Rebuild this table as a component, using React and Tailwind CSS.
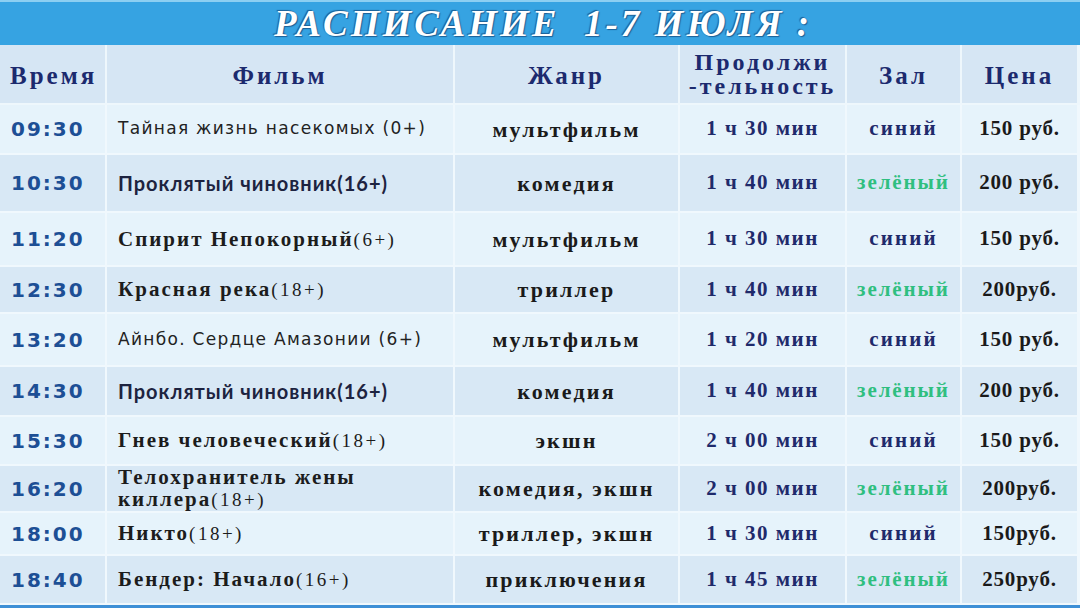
import React from "react";

const rows = [
  { t: "09:30", f: "Тайная жизнь насекомых (0+)", fs: "a", g: "мультфильм", d: "1 ч 30 мин", z: "синий", p: "150 руб." },
  { t: "10:30", f: "Проклятый чиновник(16+)", fs: "b", g: "комедия", d: "1 ч 40 мин", z: "зелёный", p: "200 руб." },
  { t: "11:20", f: "Спирит Непокорный", r: "(6+)", fs: "c", g: "мультфильм", d: "1 ч 30 мин", z: "синий", p: "150 руб." },
  { t: "12:30", f: "Красная река", r: "(18+)", fs: "c", g: "триллер", d: "1 ч 40 мин", z: "зелёный", p: "200руб." },
  { t: "13:20", f: "Айнбо. Сердце Амазонии (6+)", fs: "a", g: "мультфильм", d: "1 ч 20 мин", z: "синий", p: "150 руб." },
  { t: "14:30", f: "Проклятый чиновник(16+)", fs: "b", g: "комедия", d: "1 ч 40 мин", z: "зелёный", p: "200 руб." },
  { t: "15:30", f: "Гнев человеческий", r: "(18+)", fs: "c", g: "экшн", d: "2 ч 00 мин", z: "синий", p: "150 руб." },
  { t: "16:20", f: "Телохранитель жены", f2: "киллера", r: "(18+)", fs: "c", g: "комедия, экшн", d: "2 ч 00 мин", z: "зелёный", p: "200руб." },
  { t: "18:00", f: "Никто", r: "(18+)", fs: "c", g: "триллер, экшн", d: "1 ч 30 мин", z: "синий", p: "150руб." },
  { t: "18:40", f: "Бендер: Начало", r: "(16+)", fs: "c", g: "приключения", d: "1 ч 45 мин", z: "зелёный", p: "250руб." },
];

const heights = ["h-[50px]", "h-[58px]", "h-[54px]", "h-[47px]", "h-[53px]", "h-[50px]", "h-[49px]", "h-[47px]", "h-[43px]", "h-[49px]"];

const serif = "font-['Liberation_Serif','Times_New_Roman',serif] font-bold";

function Film({ r }) {
  if (r.fs === "a") {
    return (
      <span className="font-['DejaVu_Sans',Verdana,sans-serif] text-[17px] tracking-[1.3px] text-[#222]">{r.f}</span>
    );
  }
  if (r.fs === "b") {
    return (
      <span className="font-['Lato','Open_Sans',sans-serif] font-bold text-[20px] tracking-[1px] text-[#1d2340]">{r.f}</span>
    );
  }
  return (
    <span className={`${serif} text-[21px] tracking-[2px] text-[#1c1c1c] leading-[22px]`}>
      {r.f}
      {r.f2 ? <br /> : null}
      {r.f2}
      <span className="text-[19px] font-normal tracking-[2.5px]">{r.r}</span>
    </span>
  );
}

export default function App() {
  return (
    <div className="w-[1080px] h-[608px] overflow-hidden bg-[#e6f3fb] flex flex-col">
      <div className="h-[45px] bg-[#36a3e2] border-t-2 border-[#8ccff2] flex items-center justify-center pl-[6px]">
        <span className="font-['Liberation_Serif','Times_New_Roman',serif] font-bold italic text-[37px] tracking-[3px] text-white whitespace-pre leading-none [text-shadow:1px_1px_1px_#1b5f96,-1px_-1px_1px_#1b5f96]">
          РАСПИСАНИЕ  1-7 ИЮЛЯ :
        </span>
      </div>
      <div className="flex flex-col">
        <div className="flex h-[60px] border-b-2 border-[#eef7fc] text-[#1c2a6e]">
          <div className="w-[107px] border-r-2 border-[#eef7fc] bg-[#d6e6f4] flex items-center pl-[10px] pt-[3px]">
            <span className={`${serif} text-[25px] tracking-[3px]`}>Время</span>
          </div>
          <div className="w-[348px] border-r-2 border-[#eef7fc] bg-[#d6e6f4] flex items-center justify-center pt-[3px]">
            <span className={`${serif} text-[25px] tracking-[3px]`}>Фильм</span>
          </div>
          <div className="w-[225px] border-r-2 border-[#eef7fc] bg-[#d6e6f4] flex items-center justify-center pt-[3px]">
            <span className={`${serif} text-[25px] tracking-[3px]`}>Жанр</span>
          </div>
          <div className="w-[167px] border-r-2 border-[#eef7fc] bg-[#d6e6f4] flex items-center justify-center">
            <span className={`${serif} text-[24px] tracking-[3px] leading-[24px] text-center`}>Продолжи<br />-тельность</span>
          </div>
          <div className="w-[115px] border-r-2 border-[#eef7fc] bg-[#d6e6f4] flex items-center justify-center pt-[3px]">
            <span className={`${serif} text-[25px] tracking-[3px]`}>Зал</span>
          </div>
          <div className="flex-1 border-r-[3px] border-[#eef7fc] bg-[#d6e6f4] flex items-center justify-center pt-[3px]">
            <span className={`${serif} text-[25px] tracking-[3px]`}>Цена</span>
          </div>
        </div>
        {rows.map((r, i) => {
          const bg = i % 2 === 0 ? "bg-[#e6f3fb]" : "bg-[#d8e8f5]";
          return (
            <div key={i} className={`flex ${heights[i]} border-b-2 border-[#f0f8fd]`}>
              <div className={`w-[107px] border-r-2 border-[#f0f8fd] ${bg} flex items-center pl-[11px]`}>
                <span className="font-['DejaVu_Sans',Verdana,sans-serif] font-bold text-[20px] tracking-[2px] text-[#1d4f95]">{r.t}</span>
              </div>
              <div className={`w-[348px] border-r-2 border-[#f0f8fd] ${bg} flex items-center pl-[11px]`}>
                <Film r={r} />
              </div>
              <div className={`w-[225px] border-r-2 border-[#f0f8fd] ${bg} flex items-center justify-center`}>
                <span className={`${serif} text-[22px] tracking-[2.2px] text-[#1a1a1a]`}>{r.g}</span>
              </div>
              <div className={`w-[167px] border-r-2 border-[#f0f8fd] ${bg} flex items-center justify-center`}>
                <span className={`${serif} text-[21px] tracking-[1.5px] text-[#1f2a6b]`}>{r.d}</span>
              </div>
              <div className={`w-[115px] border-r-2 border-[#f0f8fd] ${bg} flex items-center justify-center`}>
                {r.z === "синий" ? (
                  <span className={`${serif} text-[21px] tracking-[2.2px] text-[#1f2a6b]`}>{r.z}</span>
                ) : (
                  <span className={`${serif} text-[21px] tracking-[1.9px] text-[#2fbf80]`}>{r.z}</span>
                )}
              </div>
              <div className={`flex-1 border-r-[3px] border-[#f0f8fd] ${bg} flex items-center justify-center`}>
                <span className={`${serif} text-[21px] tracking-[0.8px] text-[#1a1a1a]`}>{r.p}</span>
              </div>
            </div>
          );
        })}
        <div className="h-[3px] bg-[#3d8fd6]"></div>
      </div>
    </div>
  );
}
